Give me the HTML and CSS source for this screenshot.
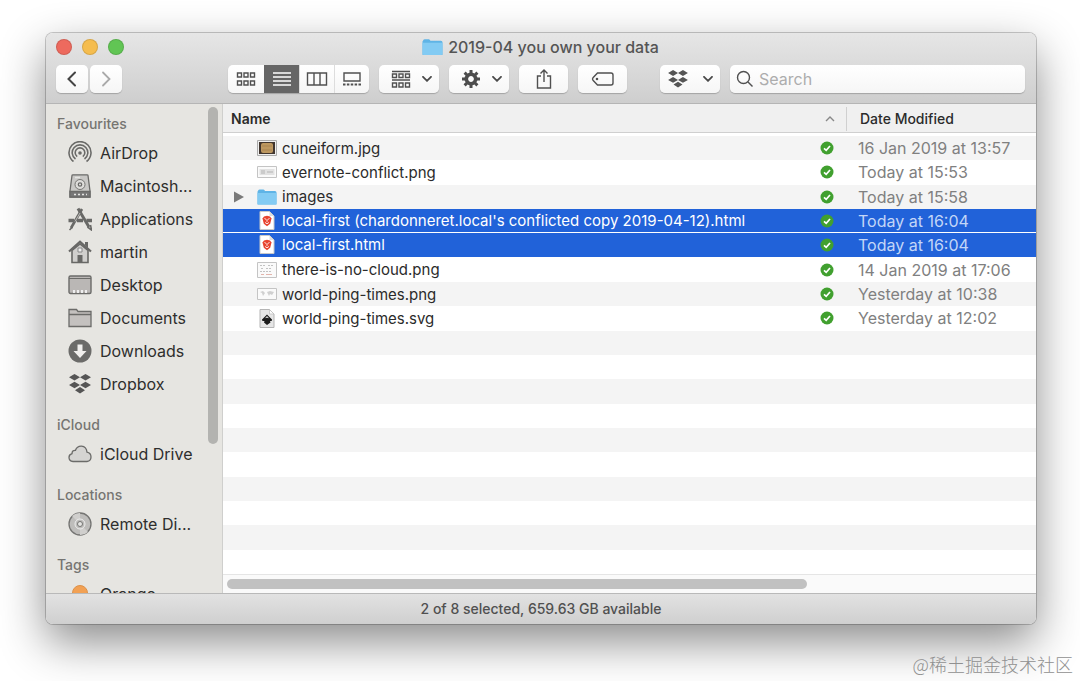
FILE: index.html
```html
<!DOCTYPE html>
<html lang="en">

<head>
    <meta charset="UTF-8">
    <meta name="viewport" content="width=device-width, initial-scale=1.0">
    <title>2019-04 you own your data</title>
    <link rel="stylesheet" href="styles.css">
</head>

<body>
    <!-- Shared icons -->
    <svg class="sprite" aria-hidden="true">
        <symbol id="folder" viewBox="0 0 20 17">
            <path d="M1 2.5Q1 1 2.500 1H6.500Q7.500 1 8 2.500H18Q19.500 2.500 19.500 4V16H.5V3z" fill="#5fb4e6" />
            <path d="M.5 4.500H19.500V15Q19.500 16 18.500 16H1.500Q.5 16 .5 15z" fill="#83cbf3" />
        </symbol>
        <symbol id="check" viewBox="0 0 14 14">
            <circle cx="7" cy="7" r="6.500" fill="#41a02f" />
            <path d="M4 7.300L6.200 9.300L10 5" fill="none" stroke="#fff" stroke-width="1.700" />
        </symbol>
        <symbol id="dropbox" viewBox="0 0 24 20">
            <path d="M6.500 0L12 3.300L6.500 6.600L1 3.300zM17.500 0L23 3.300L17.500 6.600L12 3.300zM6.500 7.700L12 11L6.500 14.300L1 11zM17.500 7.700L23 11L17.500 14.300L12 11zM12 13L17 16.200L12 19.500L7 16.200z" />
        </symbol>
        <symbol id="chevron" viewBox="0 0 10 6">
            <path d="M1 .8L5 4.800L9 .8" fill="none" stroke="#4a4a4a" stroke-width="1.800" stroke-linecap="round" />
        </symbol>
        <symbol id="page" viewBox="0 0 15 19">
            <path d="M.5 .5H10L14.500 5V18.500H.5z" fill="#fff" stroke="#c9c9c9" />
            <path d="M10 .5V5H14.500z" fill="#ddd" />
            <path d="M4.500 5.500L7.500 4.700L10.500 5.500L12 7.500L10.700 12.700L7.500 15.200L4.300 12.700L3 7.500z" fill="#e8432f" />
            <path d="M5 7.500L6.800 8.500M10 7.500L8.200 8.500M5.600 11.500L7.500 12.800L9.400 11.500M7.500 8.500V10.800" stroke="#fff" stroke-width=".9" fill="none" />
        </symbol>
    </svg>

    <main class="window">
        <header class="titlebar">
            <div class="title-row">
                <div class="lights">
                    <button class="light red" aria-label="Close"></button>
                    <button class="light yellow" aria-label="Minimise"></button>
                    <button class="light green" aria-label="Zoom"></button>
                </div>
                <h1><svg width="21" height="18"><use href="#folder" /></svg>2019-04 you own your data</h1>
            </div>

            <div class="toolbar">
                <div class="nav-buttons">
                    <button class="btn" aria-label="Back"><svg width="12" height="18" viewBox="0 0 12 18"><path d="M9 2.500L2.500 9L9 15.500" fill="none" stroke="#444" stroke-width="2" stroke-linecap="round" /></svg></button>
                    <button class="btn" aria-label="Forward"><svg width="12" height="18" viewBox="0 0 12 18"><path d="M3 2.500L9.500 9L3 15.500" fill="none" stroke="#aaa" stroke-width="1.800" stroke-linecap="round" /></svg></button>
                </div>
                <div class="views">
                    <button aria-label="Icons"><svg class="line" width="20" height="16" viewBox="0 0 20 16"><path d="M1.500 2h4v4h-4zM8 2h4v4H8zM14.500 2h4v4h-4zM1.500 10h4v4h-4zM8 10h4v4H8zM14.500 10h4v4h-4z" /></svg></button>
                    <button class="active" aria-label="List"><svg class="line" width="20" height="16" viewBox="0 0 20 16"><path d="M1 2H19M1 6H19M1 10H19M1 14H19" /></svg></button>
                    <button aria-label="Columns"><svg class="line" width="22" height="16" viewBox="0 0 22 16"><path d="M1.500 2h19v12h-19zM8 2v12M14 2v12" /></svg></button>
                    <button aria-label="Gallery"><svg class="line" width="20" height="16" viewBox="0 0 20 16"><path d="M2 2h16v8H2z" /><path d="M1 13.500H19" stroke-width="2" stroke-dasharray="2.500 1.370" /></svg></button>
                </div>
                <button class="btn wide" aria-label="Group by">
                    <svg class="line" width="20" height="19" viewBox="0 0 20 19"><path d="M1 1.500H19M1 10H19M1.500 4h4v3.500h-4zM8 4h4v3.500H8zM14.500 4h4v3.500h-4zM1.500 13h4v4h-4zM8 13h4v4H8zM14.500 13h4v4h-4z" /></svg>
                    <svg width="10" height="6"><use href="#chevron" /></svg>
                </button>
                <button class="btn wide" aria-label="Action">
                    <svg width="20" height="20" viewBox="-10 -10 20 20">
                        <circle r="4.700" fill="none" stroke="#4d4d4d" stroke-width="3.600" />
                        <path d="M0-9V-5M0 9V5M-9 0H-5M9 0H5M-6.400-6.400L-4-4M6.400 6.400L4 4M-6.400 6.400L-4 4M6.400-6.400L4-4" stroke="#4d4d4d" stroke-width="3" />
                    </svg>
                    <svg width="10" height="6"><use href="#chevron" /></svg>
                </button>
                <button class="btn medium" aria-label="Share"><svg class="line" width="18" height="22" viewBox="0 0 18 22"><path d="M6 8H2.500V20H15.500V8H12M9 14V2M5.500 5.500L9 2L12.500 5.500" /></svg></button>
                <button class="btn medium" aria-label="Tags"><svg class="line" width="24" height="16" viewBox="0 0 24 16"><path d="M6.500 2H20Q22 2 22 4V12Q22 14 20 14H6.500L2 9.200Q1 8 2 6.800z" /><circle cx="6" cy="8" r=".6" /></svg></button>
                <button class="btn wide dropbox-btn" aria-label="Dropbox">
                    <svg class="solid" width="22" height="18"><use href="#dropbox" /></svg>
                    <svg width="10" height="6"><use href="#chevron" /></svg>
                </button>
                <label class="search">
                    <svg class="line" width="18" height="18" viewBox="0 0 18 18"><circle cx="7.500" cy="7.500" r="6" /><path d="M12 12L16.500 16.500" /></svg>
                    <input type="text" placeholder="Search" aria-label="Search">
                </label>
            </div>
        </header>

        <div class="content">
            <aside class="sidebar">
                <nav class="places">
                    <section>
                        <h2>Favourites</h2>
                        <ul>
                            <li><a href="#"><svg width="24" height="24" viewBox="0 0 24 24" fill="none" stroke="#6b6b69" stroke-width="1.600"><path d="M5.500 20.500A11 11 0 1 1 18.500 20.500M7.500 18A7.800 7.800 0 1 1 16.500 18M9.200 15.600A4.800 4.800 0 1 1 14.800 15.600" /><circle cx="12" cy="12" r="1.800" fill="#6b6b69" stroke="none" /></svg>AirDrop</a></li>
                            <li><a href="#"><svg width="24" height="24" viewBox="0 0 24 24" fill="#c9c8c6" stroke="#6b6b69" stroke-width="1.300"><path d="M4 1.500Q4 .8 5 .8H19Q20 .8 20 1.500L22 17V23H2V17z" /><path d="M2 17.500H22V23H2z" fill="#777" /><circle cx="12" cy="10.500" r="5" fill="#dddcda" stroke-width=".9" /><circle cx="12" cy="10.500" r="1.700" fill="none" /><path d="M7 3.500H12M6 20.500h2M10 20.500h2M14 20.500h2M18 20.500h1" stroke="#e5e5e3" /></svg>Macintosh...</a></li>
                            <li><a href="#"><svg width="24" height="24" viewBox="0 0 24 24" fill="none" stroke="#696967"><path d="M10 1.500L21 20" stroke-width="3" /><path d="M14 2L3 21" stroke-width="2.600" /><path d="M.5 13.500H6M9 13.500H15M18.500 13.500H24" stroke-width="3.500" /><path d="M19.500 20L23.500 23L22.500 18M1.500 23L4.500 20" stroke-width="1.600" /><path d="M12 6L7 14.500" stroke="#d0cfcd" stroke-width=".8" /></svg>Applications</a></li>
                            <li><a href="#"><svg width="24" height="24" viewBox="0 0 24 24"><path d="M4 10.500V22.500H20V10.500L12 4z" fill="#d0cfcd" stroke="#686866" stroke-width="1.600" /><path d="M1 11.500L12 1.800L23 11.500" fill="none" stroke="#686866" stroke-width="2.200" /><path d="M17 2H20V8L17 5z" fill="#686866" /><path d="M10 8h4v4h-4z" fill="#eee" stroke="#888" /><path d="M9.500 15H14.500V22H9.500z" fill="#686866" /></svg>martin</a></li>
                            <li><a href="#"><svg width="24" height="24" viewBox="0 0 24 24"><rect x="1" y="3" width="22" height="17.500" rx="1.500" fill="#bab7b5" stroke="#6b6b69" stroke-width="1.400" /><path d="M1 5.500H23" stroke="#6b6b69" /><path d="M5 18.500h2M9 18.500h2M13 18.500h2M17 18.500h2" stroke="#eee" stroke-width="3" /></svg>Desktop</a></li>
                            <li><a href="#"><svg width="24" height="24" viewBox="0 0 24 24" fill="#c4c1bf" stroke="#6b6b69" stroke-width="1.300"><path d="M1 3.500H8.500L10 5.500H23V20.500H1zM1 8.500H23" /></svg>Documents</a></li>
                            <li><a href="#"><svg width="24" height="24" viewBox="0 0 24 24"><circle cx="12" cy="12" r="11.500" fill="#6b6b69" /><path d="M9.500 5.500H14.500V12H18.500L12 19L5.500 12H9.500z" fill="#f0efed" /></svg>Downloads</a></li>
                            <li><a href="#"><svg class="solid" width="24" height="22"><use href="#dropbox" /></svg>Dropbox</a></li>
                        </ul>
                    </section>
                    <section>
                        <h2>iCloud</h2>
                        <ul>
                            <li><a href="#"><svg width="24" height="24" viewBox="0 0 24 24"><path d="M5 19.500Q1 19 1 15.500Q1 12.500 4 11.700Q4 8 7.500 8.300Q9 4 13.500 4.200Q18.500 4.700 19 10.200Q23 11 23 15Q23 19 19 19.500z" fill="#d5d4d2" stroke="#6b6b69" stroke-width="1.300" /></svg>iCloud Drive</a></li>
                        </ul>
                    </section>
                    <section>
                        <h2>Locations</h2>
                        <ul>
                            <li><a href="#"><svg width="24" height="24" viewBox="0 0 24 24" fill="#bebdbb" stroke="#757573"><circle cx="12" cy="12" r="11" stroke-width="1.300" /><path d="M12 12L4 4A11 11 0 0 1 12 1zM12 12L20 20A11 11 0 0 1 12 23z" fill="#d0cfcd" stroke="none" /><circle cx="12" cy="12" r="5" stroke="#eee" /><circle cx="12" cy="12" r="2.500" fill="#e5e5e3" /></svg>Remote Di...</a></li>
                        </ul>
                    </section>
                    <section>
                        <h2>Tags</h2>
                        <ul>
                            <li><a href="#"><svg width="24" height="24" viewBox="0 0 24 24"><circle cx="12" cy="11" r="7.500" fill="#f2a154" stroke="#dc914a" /></svg>Orange</a></li>
                        </ul>
                    </section>
                </nav>
                <div class="scroll-y"></div>
            </aside>

            <section class="files">
                <div class="table-wrap">
                    <table>
                        <thead>
                            <tr>
                                <th class="name">Name</th>
                                <th class="status"><svg width="10" height="6" viewBox="0 0 10 6"><path d="M1 5L5 1L9 5" fill="none" stroke="#888" stroke-width="1.400" /></svg></th>
                                <th class="date">Date Modified</th>
                            </tr>
                        </thead>
                        <tbody>
                            <tr>
                                <td class="name"><div class="file"><svg width="20" height="20" viewBox="0 0 20 20"><path d="M.5 2.500h19v15H.5z" fill="#eee" stroke="#aaa" /><path d="M2 4h16v12H2z" fill="#40352e" /><rect x="4" y="5" width="12" height="10" rx="2" fill="#bd9860" /><path d="M5 8h10M5 12h10" stroke="#a98450" /></svg>cuneiform.jpg</div></td>
                                <td class="status"><svg width="14" height="14"><use href="#check" /></svg></td>
                                <td class="date">16 Jan 2019 at 13:57</td>
                            </tr>
                            <tr>
                                <td class="name"><div class="file"><svg width="20" height="20" viewBox="0 0 20 20"><path d="M.5 4.500h19v11H.5z" fill="#fafafa" stroke="#c4c4c4" /><path d="M2.500 7h15v6h-15z" fill="#e2e2e2" /><path d="M4 9h4M4 11h4M10 10h6" stroke="#aaa" stroke-width=".8" /></svg>evernote-conflict.png</div></td>
                                <td class="status"><svg width="14" height="14"><use href="#check" /></svg></td>
                                <td class="date">Today at 15:53</td>
                            </tr>
                            <tr>
                                <td class="name"><div class="file folder"><button class="expand" aria-label="Expand images"><svg width="10" height="12" viewBox="0 0 10 12"><path d="M0 .5L10 6L0 11.500z" fill="#7a7a7a" /></svg></button><svg width="20" height="18"><use href="#folder" /></svg>images</div></td>
                                <td class="status"><svg width="14" height="14"><use href="#check" /></svg></td>
                                <td class="date">Today at 15:58</td>
                            </tr>
                            <tr class="selected">
                                <td class="name"><div class="file"><svg width="20" height="19"><use href="#page" /></svg>local-first (chardonneret.local's conflicted copy 2019-04-12).html</div></td>
                                <td class="status"><svg width="14" height="14"><use href="#check" /></svg></td>
                                <td class="date">Today at 16:04</td>
                            </tr>
                            <tr class="selected">
                                <td class="name"><div class="file"><svg width="20" height="19"><use href="#page" /></svg>local-first.html</div></td>
                                <td class="status"><svg width="14" height="14"><use href="#check" /></svg></td>
                                <td class="date">Today at 16:04</td>
                            </tr>
                            <tr>
                                <td class="name"><div class="file"><svg width="20" height="20" viewBox="0 0 20 20"><path d="M.5 2.500h19v15H.5z" fill="#fafafa" stroke="#c4c4c4" /><path d="M3 5.500h5M11 5.500h5M4 8.500h3M9 8.500h6M3 11.500h12" stroke="#c2c2c2" stroke-dasharray="2 1" /><path d="M4 14.500h3M9 14.500h6" stroke="#e3b5ac" /></svg>there-is-no-cloud.png</div></td>
                                <td class="status"><svg width="14" height="14"><use href="#check" /></svg></td>
                                <td class="date">14 Jan 2019 at 17:06</td>
                            </tr>
                            <tr>
                                <td class="name"><div class="file"><svg width="20" height="20" viewBox="0 0 20 20"><path d="M.5 4.500h19v11H.5z" fill="#fafafa" stroke="#c4c4c4" /><path d="M3 8l3-1l2 2l-2 3l-1-3zM10 8l3-1l4 1l-2 3l-2-1l-1 2z" fill="#d0d0d0" /></svg>world-ping-times.png</div></td>
                                <td class="status"><svg width="14" height="14"><use href="#check" /></svg></td>
                                <td class="date">Yesterday at 10:38</td>
                            </tr>
                            <tr>
                                <td class="name"><div class="file"><svg width="20" height="19" viewBox="-2.500 0 20 19"><path d="M.5 .5H10L14.500 5V18.500H.5z" fill="#e6e6e6" stroke="#b5b5b5" /><path d="M10 .5V5H14.500z" fill="#fff" stroke="#bbb" stroke-width=".7" /><path d="M7.500 5.500L12.500 10.500Q13 12 10.500 12L11 13.500L7.500 16L4.500 13.500L5 12Q2 12 2.500 10.500z" fill="#1c1c1c" /><path d="M5.500 9.200L7.500 7L9.500 9.200L7.500 8.800z" fill="#ddd" /></svg>world-ping-times.svg</div></td>
                                <td class="status"><svg width="14" height="14"><use href="#check" /></svg></td>
                                <td class="date">Yesterday at 12:02</td>
                            </tr>
                            <!-- Empty striped rows -->
                            <tr><td colspan="3"></td></tr>
                            <tr><td colspan="3"></td></tr>
                            <tr><td colspan="3"></td></tr>
                            <tr><td colspan="3"></td></tr>
                            <tr><td colspan="3"></td></tr>
                            <tr><td colspan="3"></td></tr>
                            <tr><td colspan="3"></td></tr>
                            <tr><td colspan="3"></td></tr>
                            <tr><td colspan="3"></td></tr>
                            <tr><td colspan="3"></td></tr>
                        </tbody>
                    </table>
                </div>
                <div class="scroll-x"><div class="thumb"></div></div>
            </section>
        </div>

        <footer class="statusbar">2 of 8 selected, 659.63 GB available</footer>
    </main>

    <div class="watermark">@稀土掘金技术社区</div>
</body>

</html>
```
FILE: styles.css
```css
* {
    margin: 0;
    padding: 0;
    box-sizing: border-box;
}

body {
    display: flex;
    height: 100vh;
    padding: 33px 44px 57px 46px;
    font-family: Inter, "Liberation Sans", sans-serif;
    font-size: 16px;
    background: #fff;
    color: #2b2b2b;
    overflow: hidden;
}

button {
    border: 0;
    background: none;
    font: inherit;
}

svg {
    display: block;
    flex: none;
}

.sprite {
    position: absolute;
    width: 0;
    height: 0;
}

.line {
    fill: none;
    stroke: #505050;
    stroke-width: 1.4;
}

.solid {
    fill: #555;
}

.window {
    flex: 1;
    min-width: 0;
    display: flex;
    flex-direction: column;
    border-radius: 7px;
    overflow: hidden;
    box-shadow: 0 0 0 1px rgba(0, 0, 0, 0.2), 0 18px 46px rgba(0, 0, 0, 0.46);
}

/* Title bar and toolbar */
.titlebar {
    padding: 0 11px 10px 10px;
    background: linear-gradient(#e6e6e6, #cecece);
    border-bottom: 1px solid #b5b5b5;
}

.title-row {
    display: grid;
    grid-template-columns: 1fr auto 1fr;
    align-items: center;
    height: 28px;
    margin-bottom: 4px;
}

.lights {
    display: flex;
    gap: 10px;
}

.light {
    width: 16px;
    height: 16px;
    border-radius: 50%;
    border: 1px solid rgba(0, 0, 0, 0.12);
}

.red {
    background: #ed6a5e;
}

.yellow {
    background: #f5bd4f;
}

.green {
    background: #61c554;
}

h1 {
    display: flex;
    align-items: center;
    gap: 5px;
    font-size: 16px;
    font-weight: 500;
    color: #555;
}

.toolbar {
    display: flex;
    gap: 10px;
}

.nav-buttons {
    display: flex;
    gap: 2px;
    width: 162px;
}

.btn,
.views,
.search {
    height: 28px;
    border-radius: 5px;
    background: linear-gradient(#fff, #f6f6f6);
    box-shadow: 0 1px 1px rgba(0, 0, 0, 0.22);
}

.btn {
    display: flex;
    align-items: center;
    justify-content: center;
    width: 32px;
}

.wide {
    gap: 11px;
    width: 60px;
    padding-left: 5px;
}

.medium {
    width: 49px;
}

.dropbox-btn {
    gap: 14px;
    margin-left: 23px;
    padding-left: 0;
}

.views {
    display: flex;
    width: 141px;
}

.views button {
    width: 35px;
    display: flex;
    align-items: center;
    justify-content: center;
    border-left: 1px solid #ddd;
}

.views button:first-child {
    flex: 1;
    border-left: 0;
}

.views .active {
    background: #666;
    border-color: #666;
}

.active .line {
    stroke: #fff;
}

.search {
    flex: 1;
    display: flex;
    align-items: center;
    gap: 5px;
    padding: 0 6px;
}

.search input {
    flex: 1;
    min-width: 0;
    border: 0;
    outline: 0;
    background: none;
    font: inherit;
}

.search input::placeholder {
    color: #adadad;
}

/* Sidebar */
.content {
    flex: 1;
    min-height: 0;
    display: flex;
}

.sidebar {
    width: 177px;
    flex: none;
    display: flex;
    overflow: hidden;
    background: #e6e5e1;
    border-right: 1px solid #cfcfcd;
}

.places {
    flex: 1;
    padding: 8px 0 0 11px;
    white-space: nowrap;
}

.places section {
    margin-bottom: 13px;
}

h2 {
    font-size: 14px;
    font-weight: 500;
    line-height: 24px;
    color: #767572;
}

.places ul {
    list-style: none;
}

.places a {
    display: flex;
    align-items: center;
    gap: 8px;
    height: 33px;
    padding-left: 11px;
    color: #2e2e2d;
    text-decoration: none;
}

.scroll-y {
    width: 10px;
    height: 69%;
    margin: 3px 4px 0 0;
    border-radius: 5px;
    background: #b3b3b0;
}

/* File list */
.files {
    flex: 1;
    min-width: 0;
    display: flex;
    flex-direction: column;
    background: #fff;
}

.table-wrap {
    flex: 1;
    min-height: 0;
}

table {
    width: 100%;
    height: 100%;
    table-layout: fixed;
    border-collapse: separate;
    border-spacing: 0;
    white-space: nowrap;
}

th {
    height: 32px;
    font-size: 14px;
    font-weight: 600;
    text-align: left;
    background: #f0f0f0;
    background-clip: padding-box;
    border-bottom: 3px solid #fff;
    box-shadow: inset 0 -1px #cfcfcf;
}

th.name {
    padding-left: 8px;
}

th.date {
    padding-left: 14px;
    font-weight: 500;
    background: linear-gradient(#d0d0d0, #d0d0d0) no-repeat left center / 1px 24px #f0f0f0;
}

td {
    height: 24px;
}

.status {
    width: 39px;
}

.date {
    width: 190px;
    padding-left: 12px;
}

.status svg {
    margin: 0 auto;
}

th.status svg {
    margin-left: 18px;
}

tbody tr:nth-child(odd) {
    background: #f4f4f4;
}

td.date {
    color: #808080;
}

.file {
    display: flex;
    align-items: center;
    gap: 5px;
    padding-left: 34px;
    font-size: 15px;
}

.file.folder {
    padding-left: 11px;
}

.expand {
    margin-right: 8px;
}

tbody tr.selected {
    background: #fff;
}

.selected td {
    background: #2162d9;
    background-clip: padding-box;
    border-bottom: 1px solid #fff;
    color: #fff;
}

.selected td.date {
    color: #c3d6f7;
}

.scroll-x {
    height: 19px;
    padding: 4px;
    background: #fafafa;
    border-top: 1px solid #e5e5e5;
}

.thumb {
    width: 72%;
    height: 10px;
    border-radius: 5px;
    background: #c1c1c1;
}

.statusbar {
    height: 31px;
    line-height: 30px;
    border-top: 1px solid #b9b9b9;
    background: linear-gradient(#e2e2e2, #cfcfcf);
    font-size: 14px;
    font-weight: 500;
    text-align: center;
    color: #505050;
}

.watermark {
    position: absolute;
    right: 7px;
    bottom: 4px;
    font-family: "Noto Sans CJK SC", sans-serif;
    font-size: 18px;
    font-weight: 300;
    line-height: 26px;
    color: #909090;
}
```
